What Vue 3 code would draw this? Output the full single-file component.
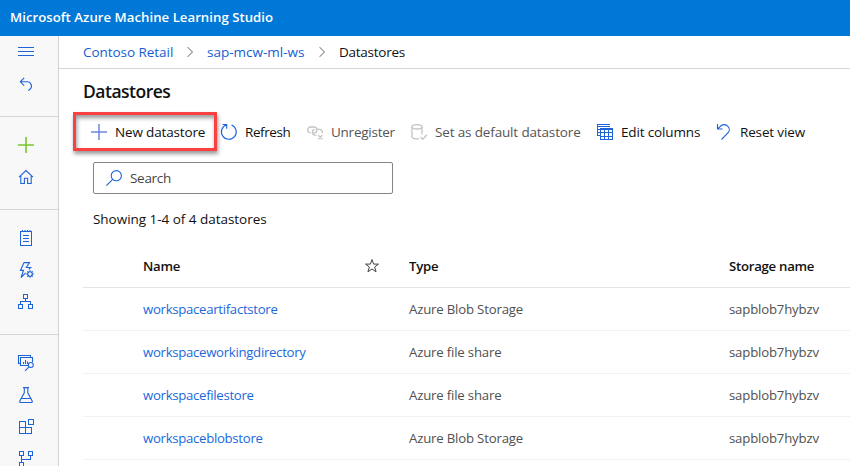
<script setup>
const rows = [
  { name: 'workspaceartifactstore', type: 'Azure Blob Storage', storage: 'sapblob7hybzv' },
  { name: 'workspaceworkingdirectory', type: 'Azure file share', storage: 'sapblob7hybzv' },
  { name: 'workspacefilestore', type: 'Azure file share', storage: 'sapblob7hybzv' },
  { name: 'workspaceblobstore', type: 'Azure Blob Storage', storage: 'sapblob7hybzv' },
]
</script>

<template>
  <div class="app">
    <header class="topbar">Microsoft Azure Machine Learning Studio</header>
    <div class="body">
      <nav class="side">
        <div class="group first">
          <a class="item menu"><svg viewBox="0 0 16 16"><path class="crisp" d="M0 4.500h16M0 8.500h16M0 12.500h16" /></svg></a>
          <a class="item back"><svg viewBox="0 0 16 16"><path d="M6.200.9 2.300 4.800l3.900 3.900M2.500 4.800h6.800a4.200 4.200 0 0 1 2.900 7.200l-1.900 1.700" /></svg></a>
        </div>
        <div class="group">
          <a class="item"><svg class="green" viewBox="0 0 16 16"><path d="M8 0v16M0 8h16" /></svg></a>
          <a class="item"><svg viewBox="0 0 16 16"><path d="M1 8.200 8 1.600l7 6.600M2.800 6.800v7.700h3.600V9.300h3.200v5.200h3.600V6.800" /></svg></a>
        </div>
        <div class="group">
          <a class="item"><svg viewBox="0 0 16 16"><path class="crisp" d="M2.500 1.500h11v14h-11zM5 5.500h6M5 8.500h6M5 11.500h6" /><path d="M4.500 0v2M7 0v2M9.500 0v2M12 0v2" /></svg></a>
          <a class="item"><svg viewBox="0 0 16 16"><path d="M6 .6h5.500L8.300 5.500h4.400l-1.900 1.900M6 .6 2.500 8.400h3L3 15.500l4.600-4.600" /><circle cx="12" cy="12" r="2.300" /><path d="M12 8.200v1.500M12 14.300v1.500M8.200 12h1.500M14.300 12h1.500M9.300 9.300l1.100 1.100M13.600 13.600l1.100 1.100M14.700 9.300l-1.100 1.100M10.400 13.600l-1.100 1.100" /></svg></a>
          <a class="item"><svg viewBox="0 0 16 16"><path class="crisp" d="M5.500.5h4v4h-4zM.5 10.500h4v4h-4zM10.500 10.500h4v4h-4zM7.500 4.500v3M2.500 10V7.500h10V10" /></svg></a>
        </div>
        <div class="group">
          <a class="item"><svg viewBox="0 0 16 16"><path d="M.5 9V.5h12v2M.5 8.500h2M10 10.500H2.500v-8h12V7M5.500 9V7M7.500 9V5M9.500 9V6.500" /><circle cx="12.800" cy="10" r="2.500" /><path d="m11 11.800-4 4" /></svg></a>
          <a class="item"><svg viewBox="0 0 16 16"><path d="M5 .6h6M6.300.6v5.200L1.800 14q-.4 1.500 1 1.500h10.400q1.400 0 1-1.500L9.800 5.800V.6M3.500 11.500h9" /></svg></a>
          <a class="item"><svg viewBox="0 0 16 16"><path class="crisp" d="M1.500 2.500h6v12h-6zM1.500 8.500h12v6h-12zM10.500.5h5v5h-5z" /></svg></a>
          <a class="item"><svg viewBox="0 0 16 16"><path class="crisp" d="M1.500.5h4v4h-4zM10.500.5h4v4h-4zM1.500 11.500h4v4h-4zM3.500 4.500v7M12.500 4.500v4h-9" /></svg></a>
        </div>
      </nav>

      <main class="main">
        <div class="crumbs">
          <a class="c1">Contoso Retail</a>
          <svg viewBox="0 0 8 12"><path d="m1.500 1.200 5 4.800-5 4.800" /></svg>
          <a class="c2">sap-mcw-ml-ws</a>
          <svg viewBox="0 0 8 12"><path d="m1.500 1.200 5 4.800-5 4.800" /></svg>
          <span class="c3">Datastores</span>
        </div>
        <h1>Datastores</h1>

        <div class="toolbar">
          <button class="b1"><svg class="plus" viewBox="0 0 16 16"><path d="M8 0v16M0 8h16" /></svg><span>New datastore</span></button>
          <button class="b2"><svg viewBox="0 0 16 16"><path d="M1.500.5h4.200v4.200M5.500.8A7.400 7.400 0 1 0 10.500.9" /></svg><span>Refresh</span></button>
          <button class="b3 off"><svg viewBox="0 0 16 16"><path d="M3.500 8.800A2.900 2.900 0 0 1 3.500 3H7a2.900 2.900 0 0 1 0 5.800H6.200M9.500 11.200H8a2.900 2.900 0 0 1-.5-5.700M10.500 5.400H12.500a2.900 2.900 0 0 1 2.800 3.800M11.300 11.300l4 4M15.300 11.300l-4 4" /></svg><span>Unregister</span></button>
          <button class="b4 off"><svg viewBox="0 0 16 16"><ellipse cx="6" cy="2.800" rx="5" ry="2.200" /><path d="M1 2.800v9.900q0 1.900 4.500 2.100h2.500M11 2.800v7.700M9.500 13l2.300 2.300 4-4.500" /></svg><span>Set as default datastore</span></button>
          <button class="b5"><svg viewBox="0 0 16 16"><path class="crisp" d="M0 .5h13M0 2.500h13M.5 0v12M0 5.500h3M0 8.500h3M0 11.500h3M3 4.500h13M3 5.500h13M3.500 5v11M15.500 5v11M3 15.500h13M3.500 8.500h12M3.500 12.500h12M7.500 5v10M11.500 5v10" /></svg><span>Edit columns</span></button>
          <button class="b6"><svg viewBox="0 0 16 16"><path d="M1.500 0v5h5M1.800 4.700 4.800 2a5 5 0 0 1 7.100.3c2 2 1.700 4.800 0 6.500L5.500 15.500" /></svg><span>Reset view</span></button>
          <div class="callout"></div>
        </div>

        <div class="search">
          <svg viewBox="0 0 16 16"><circle cx="10.300" cy="5.700" r="5.100" /><path d="M6.700 9.300.4 15.600" /></svg>
          <span>Search</span>
        </div>
        <p class="count">Showing 1-4 of 4 datastores</p>

        <div class="table">
          <div class="row head">
            <span>Name</span>
            <svg viewBox="0 0 14 14"><path d="m7 .5 1.600 4.600h4.900L9.600 8l1.500 4.800L7 10l-4.100 2.800L4.400 8 .5 5.100h4.900z" /></svg>
            <span>Type</span>
            <span>Storage name</span>
          </div>
          <div v-for="r in rows" :key="r.name" class="row">
            <a>{{ r.name }}</a>
            <i></i>
            <span>{{ r.type }}</span>
            <span>{{ r.storage }}</span>
          </div>
        </div>
      </main>
    </div>
  </div>
</template>

<style>
body { margin: 0; overflow: hidden; }
</style>

<style scoped>
.app { width: 850px; height: 466px; overflow: hidden; display: flex; flex-direction: column; background: #fff; color: #111; font: 13.5px/20px "Open Sans", "Noto Sans", sans-serif; white-space: nowrap; }
svg { width: 16px; height: 16px; fill: none; stroke: #1f63d8; stroke-width: 1.1; flex: none; overflow: visible; }
.crisp { shape-rendering: crispEdges; stroke-width: 1; }
.topbar { height: 36px; flex: none; box-sizing: border-box; padding: 7px 10px; background: #0078d7; color: #fff; font-weight: 600; font-size: 13.200px; letter-spacing: .03px; }
.body { display: flex; flex: 1; min-height: 0; }
.side { width: 58px; flex: none; background: #f8f8f8; border-right: 1px solid #d2d2d2; overflow: hidden; }
.group { padding: 12px 0 16px; border-bottom: 1px solid #d6d6d6; }
.group.first { padding: 0 0 12px; }
.item { display: flex; height: 32px; align-items: center; padding-left: 18px; }
.item.menu { height: 30px; }
.item.back { height: 38px; }
.green { stroke: #7ac52b; stroke-width: 1.6; }
.main { flex: 1; min-width: 0; }
.crumbs { height: 32px; border-bottom: 1px solid #d6d6d6; padding-left: 24px; display: flex; align-items: center; }
.crumbs a { color: #1460d2; }
.crumbs svg { width: 8px; height: 12px; stroke: #999; margin-left: 13px; }
.c1 { width: 90px; letter-spacing: -.05px; }
.c2 { width: 98px; margin-left: 13px; }
.c3 { margin-left: 13px; letter-spacing: -.25px; }
h1 { margin: 9px 0 0 24px; font-size: 17.500px; line-height: 26px; font-weight: 600; letter-spacing: -.5px; }
.toolbar { position: relative; display: flex; align-items: center; height: 32px; margin-top: 12px; padding-left: 32px; letter-spacing: -.15px; }
button { display: flex; align-items: center; gap: 8px; padding: 0; border: 0; background: none; font: inherit; letter-spacing: inherit; color: inherit; flex: none; }
.b1 { width: 130px; }
.b2 { width: 86px; letter-spacing: -.4px; }
.b3 { width: 104px; letter-spacing: -.25px; }
.b4 { width: 186px; }
.b5 { width: 119px; }
.plus { stroke: #6d86df; stroke-width: 1.500; }
.off { color: #555; }
.off svg { stroke: #c4c4c4; stroke-width: 1.300; }
.callout { position: absolute; left: 14px; top: -4px; width: 138px; height: 33px; border: 3px solid #f94141; box-shadow: 1px 3px 4px rgba(0,0,0,.4), inset 1px 3px 4px rgba(0,0,0,.4); }
.search { box-sizing: border-box; width: 300px; height: 32px; margin: 14px 0 0 34px; padding-left: 12px; border: 1px solid #858585; border-radius: 2px; display: flex; align-items: center; gap: 8px; color: #444; letter-spacing: -.3px; }
.count { margin: 15px 0 0 34px; letter-spacing: -.03px; }
.table { margin: 15px 0 0 24px; }
.row { display: grid; grid-template-columns: 222px 44px 320px 1fr; align-items: center; height: 42px; padding-left: 60px; border-bottom: 1px solid #f1f1f1; color: #505050; font-size: 13.200px; letter-spacing: -.18px; }
.row a { color: #1b68dc; letter-spacing: -.3px; }
.row.head { height: 43px; border-color: #e4e4e4; color: #111; font-weight: 600; letter-spacing: -.27px; }
.head svg { width: 14px; height: 14px; stroke: #444; stroke-width: 1; }
</style>
